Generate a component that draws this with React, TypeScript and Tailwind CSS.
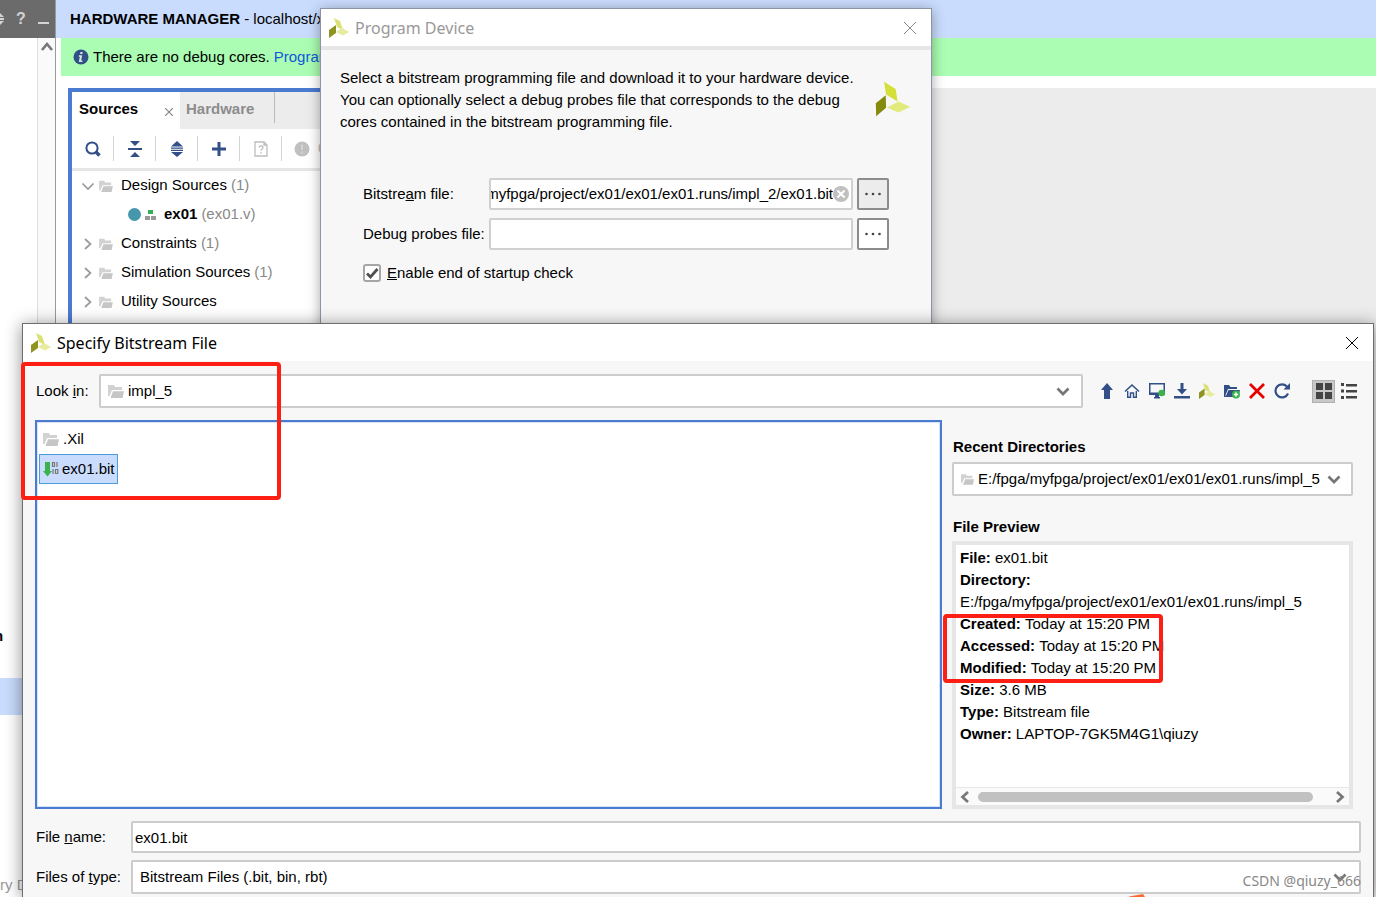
import type { ReactNode } from 'react';

const LOGO_BRIGHT = ['#d5df3a', '#858a0c', '#e3ea7c'];
const LOGO_SOFT = ['#dbe173', '#8f9420', '#e7eba0'];

function XilinxLogo({ className, colors = LOGO_SOFT }: { className: string; colors?: string[] }) {
    return (
        <svg viewBox="286 241 108 109" className={className} aria-hidden="true">
            <path d="M313 243 348 265 354 303 319 282Z" fill={colors[0]} />
            <path d="M288 308 318 284 319 322 289 348Z" fill={colors[1]} />
            <path d="M321 321 357 303 392 319 357 336Z" fill={colors[2]} />
        </svg>
    );
}

/* The title bar and toolbar sizes use a chunkier cut of the mark. */
function SmallLogo({ className }: { className: string }) {
    return (
        <svg viewBox="0 0 20 20" className={className} aria-hidden="true">
            <path d="M5 0l6 3 3 9-6-3Z" fill={LOGO_SOFT[0]} />
            <path d="M0 12l7-5v8l-7 5Z" fill={LOGO_SOFT[1]} />
            <path d="M7 14l6-4 7 4-6 3.500Z" fill={LOGO_SOFT[2]} />
        </svg>
    );
}

function FolderIcon({ className = 'h-3.5 w-4' }: { className?: string }) {
    return (
        <svg viewBox="0 0 16 14" className={`shrink-0 ${className}`} aria-hidden="true">
            <path d="M0 1h6l1 2h7v3H4L1.500 12H0Z" fill="#d2d2d2" />
            <path d="M5 7.200H16L14.500 14H2.500Z" fill="#c6c6c6" />
        </svg>
    );
}

const chevronPaths = {
    up: 'M2 10l5-6 5 6',
    down: 'M1.500 4.500l5.500 5.500 5.500-5.500',
    left: 'M10 2L4.500 7l5.500 5',
    right: 'M4 2l5.500 5L4 12',
};

function Chevron({ dir, thin = false }: { dir: keyof typeof chevronPaths; thin?: boolean }) {
    return (
        <svg viewBox="0 0 14 14" className="size-3.5 shrink-0" aria-hidden="true">
            <path d={chevronPaths[dir]} fill="none" stroke="currentColor" strokeWidth={thin ? 1.7 : 2.7} />
        </svg>
    );
}

function CloseIcon() {
    return (
        <svg viewBox="0 0 12 12" className="size-3" aria-hidden="true">
            <path d="M0 0l12 12M12 0L0 12" stroke="currentColor" strokeWidth="1" />
        </svg>
    );
}

function TitleBar({ title, muted = false }: { title: string; muted?: boolean }) {
    return (
        <div className="flex h-[37px] shrink-0 items-center bg-white pr-[15px] pl-2">
            <SmallLogo className="size-5" />
            <h2
                className={`ml-1.5 flex-1 font-['Noto_Sans',sans-serif] text-[16px] ${muted ? 'text-[#999]' : 'text-black'}`}
            >
                {title}
            </h2>
            <button type="button" aria-label="Close" className={muted ? 'text-[#888]' : 'text-black'}>
                <CloseIcon />
            </button>
        </div>
    );
}

/* ---- Main window ---- */

function FlowNavigator() {
    return (
        <aside className="flex w-14 shrink-0 flex-col border-r border-[#9a9a9a]">
            <div className="flex h-[38px] items-center bg-[#6b6b6b] text-[#d4d4d4]">
                <svg viewBox="0 0 4 12" className="h-3 w-1" aria-hidden="true">
                    <path d="M0 0L4 4H0ZM0 5h4v2H0ZM0 8h4L0 12Z" fill="currentColor" />
                </svg>
                <button type="button" className="ml-3 text-[16px] font-bold">?</button>
                <button type="button" aria-label="Minimize" className="mt-2 ml-3 h-0.5 w-[11px] bg-[#d4d4d4]" />
            </div>
            <div className="flex flex-1 overflow-hidden">
                <div className="flex w-[37px] flex-col justify-between">
                    <div className="mt-[590px]">
                        <p className="-ml-1.5 h-4 leading-4 font-bold">n</p>
                        <div className="mt-[34px] h-[37px] bg-[#c9dcfd]" />
                    </div>
                    <p className="mb-0.5 leading-5 whitespace-nowrap text-[#999]">ry D</p>
                </div>
                <div className="flex w-[18px] justify-center border-l border-[#ddd] bg-[#fafafa] pt-0.5 text-[#777]">
                    <Chevron dir="up" />
                </div>
            </div>
        </aside>
    );
}

function ToolCell({ label, children }: { label: string; children: ReactNode }) {
    return (
        <button
            type="button"
            aria-label={label}
            className="flex h-[25px] w-[42px] items-center justify-center border-r border-[#d4d4d4] text-[#334f87]"
        >
            {children}
        </button>
    );
}

function SourcesToolbar() {
    return (
        <div className="flex h-[42px] items-center border-b-3 border-[#e6e6e6]">
            <ToolCell label="Search">
                <svg viewBox="0 0 16 16" className="size-4">
                    <circle cx="7" cy="7" r="5.6" fill="none" stroke="currentColor" strokeWidth="2" />
                    <path d="M11 11l3.5 3.5" stroke="currentColor" strokeWidth="3.4" />
                </svg>
            </ToolCell>
            <ToolCell label="Collapse all">
                <svg viewBox="0 0 14 16" className="h-4 w-3.5" fill="currentColor">
                    <path d="M2 0h10L7 5ZM0 7h14v2H0ZM7 11l5 5H2Z" />
                </svg>
            </ToolCell>
            <ToolCell label="Expand all">
                <svg viewBox="0 0 14 16" className="h-4 w-3.5" fill="currentColor">
                    <path d="M7 0l6 5.500H1ZM1 6.500h12v1.200H1ZM1 8.700h12v1.300H1ZM1 11h12l-6 5Z" />
                </svg>
            </ToolCell>
            <ToolCell label="Add sources">
                <svg viewBox="0 0 16 16" className="size-4" fill="currentColor">
                    <path d="M6.5 1h3v5.500h5.500v3H9.500V15h-3V9.500H1v-3h5.500Z" />
                </svg>
            </ToolCell>
            <ToolCell label="Show missing files">
                <svg viewBox="0 0 14 16" className="h-4 w-3.5" fill="none" stroke="#bdbdbd" strokeWidth="1.3">
                    <path d="M1 1h9l3 3v11H1ZM10 1v3h3" />
                    <path d="M5 6.500c0-2 4-2 4 0 0 1.500-2 1.500-2 3.200M7 11v1.500" />
                </svg>
            </ToolCell>
            <div className="ml-3 flex items-center gap-2 text-[#bbb]">
                <svg viewBox="0 0 16 16" className="size-4">
                    <circle cx="8" cy="8" r="7.500" fill="#c0c0c0" />
                    <path d="M8 3.500v5.500M8 10.500v2" stroke="#d6d6d6" strokeWidth="1.800" />
                </svg>
                <span>0</span>
            </div>
        </div>
    );
}

const sources = [
    { name: 'Design Sources', count: '(1)', open: true },
    { name: 'Constraints', count: '(1)' },
    { name: 'Simulation Sources', count: '(1)' },
    { name: 'Utility Sources', count: '' },
];

function SourcesPanel() {
    return (
        <section className="w-[400px] border-4 border-[#4a7bd0] bg-white">
            <div className="flex h-[37px] bg-[#ececec] font-bold">
                <div className="flex w-[108px] items-center justify-between bg-white pr-[7px] pb-0.5 pl-[7px]">
                    <span>Sources</span>
                    <button type="button" aria-label="Close Sources" className="mt-1 text-[#888]">
                        <svg viewBox="0 0 8 8" className="size-2">
                            <path d="M0 0l8 8M8 0L0 8" stroke="currentColor" strokeWidth="1.200" />
                        </svg>
                    </button>
                </div>
                <div className="flex h-[31px] w-[95px] items-center border-r border-[#bbb] pt-1 pl-1.5 text-[#8c8c8c]">Hardware</div>
            </div>
            <SourcesToolbar />
            <ul>
                {sources.map((s) => (
                    <li key={s.name}>
                        <div className="flex h-[29px] items-center pl-[9px]">
                            <span className="text-[#999]">
                                <Chevron dir={s.open ? 'down' : 'right'} thin />
                            </span>
                            <FolderIcon className="ml-1 h-3 w-[14px]" />
                            <span className="ml-2">{s.name}</span>
                            <span className="ml-1 text-[#888]">{s.count}</span>
                        </div>
                        {s.open && (
                            <div className="flex h-[29px] items-center pl-14">
                                <span className="size-[13px] rounded-full bg-[#4797ac]" />
                                <svg viewBox="0 0 12 10" className="ml-1 h-2.5 w-3">
                                    <path d="M3 0h5v4H3Z" fill="#34b156" />
                                    <path d="M0 6h5v4H0ZM6 6h5v4H6Z" fill="#999" />
                                </svg>
                                <span className="ml-[7px] font-bold">ex01</span>
                                <span className="ml-1 text-[#888]">(ex01.v)</span>
                            </div>
                        )}
                    </li>
                ))}
            </ul>
        </section>
    );
}

function HardwareManager() {
    return (
        <main className="flex min-w-0 flex-1 flex-col">
            <header className="flex h-[38px] shrink-0 items-center bg-[#c9dcfd] pl-3.5 whitespace-pre">
                <b>HARDWARE MANAGER</b> - localhost/xil
            </header>
            <div className="ml-[5px] flex h-[38px] shrink-0 items-center bg-[#aafdb2] pl-3">
                <svg viewBox="0 0 16 16" className="size-4" aria-hidden="true">
                    <circle cx="8" cy="8" r="7.500" fill="#334f87" />
                    <path d="M7.500 3h2.200l-.4 2H7.100ZM6 6.200h3.200L8.200 11.400h1.200V13H5.800l1-5.300H5.700Z" fill="#cfe8dc" />
                </svg>
                <span className="ml-1">There are no debug cores.</span>
                <a href="#program" className="ml-1 text-[#1155dd]">Program</a>
            </div>
            <div className="mt-3 ml-3 flex flex-1 bg-[#ececec]">
                <SourcesPanel />
            </div>
        </main>
    );
}

/* ---- Program Device ---- */

function BrowseButton({ label, className }: { label: string; className: string }) {
    return (
        <button
            type="button"
            aria-label={label}
            className={`ml-1 flex size-8 items-center justify-center rounded-xs border-2 border-[#8c8c8c] ${className}`}
        >
            <svg viewBox="0 0 16 4" className="h-1 w-4" fill="#444">
                <circle cx="1.500" cy="2" r="1.300" />
                <circle cx="8" cy="2" r="1.300" />
                <circle cx="14.500" cy="2" r="1.300" />
            </svg>
        </button>
    );
}

// Long paths show their tail, so the file name stays readable.
function scrollToEnd(el: HTMLInputElement | null) {
    if (el) el.scrollLeft = el.scrollWidth;
}

function ProgramDeviceDialog() {
    return (
        <section
            role="dialog"
            aria-label="Program Device"
            className="absolute top-2 left-80 h-[340px] w-[612px] border border-[#8b95a5] bg-[#f7f7f7] shadow-[0_2px_12px_rgba(0,0,0,0.35)]"
        >
            <TitleBar title="Program Device" muted />
            <div className="border-t-4 border-[#e6e6e6] pt-[17px] pr-5 pl-[19px]">
                <div className="flex items-start justify-between">
                    <p className="leading-[22px] whitespace-nowrap">
                        Select a bitstream programming file and download it to your hardware device.
                        <br />
                        You can optionally select a debug probes file that corresponds to the debug
                        <br />
                        cores contained in the bitstream programming file.
                    </p>
                    <XilinxLogo className="mt-3.5 size-9" colors={LOGO_BRIGHT} />
                </div>
                <div className="mt-[45px] flex flex-col gap-2 pr-[22px] pl-[23px]">
                    <div className="flex items-center">
                        <label htmlFor="bitfile" className="w-[126px]">Bitstre<u>a</u>m file:</label>
                        <div className="flex h-8 flex-1 items-center rounded-xs border-2 border-[#d0d0d0] bg-white pr-0.5">
                            <input
                                id="bitfile"
                                ref={scrollToEnd}
                                className="min-w-0 flex-1 outline-none"
                                defaultValue="/myfpga/project/ex01/ex01/ex01.runs/impl_2/ex01.bit"
                            />
                            <button type="button" aria-label="Clear">
                                <svg viewBox="0 0 16 16" className="size-4">
                                    <circle cx="8" cy="8" r="8" fill="#c0c0c0" />
                                    <path d="M4.500 4.500l7 7M11.500 4.500l-7 7" stroke="#fff" strokeWidth="2" />
                                </svg>
                            </button>
                        </div>
                        <BrowseButton label="Browse bitstream file" className="bg-[#ececec]" />
                    </div>
                    <div className="flex items-center">
                        <label htmlFor="probes" className="w-[126px]">Debu<u>g</u> probes file:</label>
                        <input id="probes" className="h-8 min-w-0 flex-1 rounded-xs border-2 border-[#d0d0d0] bg-white px-1 outline-none" />
                        <BrowseButton label="Browse debug probes file" className="bg-white" />
                    </div>
                    <div className="mt-1 flex items-center">
                        <span className="grid size-[18px]">
                            <input
                                id="startup"
                                type="checkbox"
                                defaultChecked
                                className="peer col-start-1 row-start-1 size-[18px] appearance-none rounded-[3px] border-2 border-[#a6a6a6] bg-white"
                            />
                            <svg
                                viewBox="0 0 18 18"
                                className="pointer-events-none invisible col-start-1 row-start-1 size-[18px] peer-checked:visible"
                            >
                                <path d="M4 9.500l3.500 3.500L14.500 5" fill="none" stroke="#505050" strokeWidth="2.800" />
                            </svg>
                        </span>
                        <label htmlFor="startup" className="ml-1.5"><u>E</u>nable end of startup check</label>
                    </div>
                </div>
            </div>
        </section>
    );
}

/* ---- Specify Bitstream File ---- */

const navIcons: { label: string; icon: ReactNode }[] = [
    { label: 'Up', icon: <path d="M8 0l6 7h-3v9H5V7H2Z" fill="#334f87" /> },
    {
        label: 'Home',
        icon: (
            <>
                <path d="M1 8.500L8 2l7 6.500" fill="none" stroke="#334f87" strokeWidth="1.600" />
                <path d="M3.700 8v6.300h2.800V10h3v4.300h2.800V8" fill="none" stroke="#334f87" strokeWidth="1.400" />
            </>
        ),
    },
    {
        label: 'Desktop',
        icon: (
            <>
                <path d="M0 0h16v12H0ZM1.500 1.500v8h13v-8Z" fill="#334f87" fillRule="evenodd" />
                <path d="M6 12h4v2h1v1.500H5V14h1Z" fill="#334f87" />
                <circle cx="12.700" cy="10" r="3.300" fill="#3cb24b" />
            </>
        ),
    },
    { label: 'Downloads', icon: <path d="M6.500 0h3v6H13l-5 5.500L3 6h3.500ZM0 13h16v2.500H0Z" fill="#334f87" /> },
    { label: 'Install directory', icon: null },
    {
        label: 'New folder',
        icon: (
            <>
                <path d="M0 2h5l1.500 2H13v2H4L1.500 12 2 14H0Z" fill="#334f87" />
                <path d="M4.500 7H16l-2 7H1.500Z" fill="#334f87" />
                <circle cx="12" cy="11.500" r="4" fill="#3cb24b" />
                <path d="M12 9.300v4.400M9.800 11.500h4.400" stroke="#fff" strokeWidth="1.300" />
            </>
        ),
    },
    { label: 'Delete', icon: <path d="M1 1l14 14M15 1L1 15" stroke="#e60000" strokeWidth="2.800" /> },
    {
        label: 'Refresh',
        icon: (
            <>
                <path d="M14 10.500A6.500 6.500 0 1 1 12.800 3.500" fill="none" stroke="#334f87" strokeWidth="2.200" />
                <path d="M16 0v6.500H9.500Z" fill="#334f87" />
            </>
        ),
    },
];

function NavToolbar() {
    return (
        <div className="ml-[11px] flex items-center">
            {navIcons.map(({ label, icon }) => (
                <button key={label} type="button" aria-label={label} className="flex w-[25px] justify-center">
                    {icon ? (
                        <svg viewBox="0 0 16 16" className="size-4">{icon}</svg>
                    ) : (
                        <SmallLogo className="size-4" />
                    )}
                </button>
            ))}
            <button
                type="button"
                aria-label="Icon view"
                className="ml-[18px] flex size-[23px] items-center justify-center border border-[#b0b0b0] bg-[#c8c8c8]"
            >
                <svg viewBox="0 0 16 16" className="size-4" fill="#444">
                    <path d="M0 0h7v7H0ZM9 0h7v7H9ZM0 9h7v7H0ZM9 9h7v7H9Z" />
                </svg>
            </button>
            <button type="button" aria-label="List view" className="mr-1 ml-1.5">
                <svg viewBox="0 0 16 16" className="size-4" fill="#444">
                    <path d="M0 0h3v3H0ZM5 1h11v2.500H5ZM0 6.500h3v3H0ZM5 7h11v2.500H5ZM0 13h3v3H0ZM5 13h11v2.500H5Z" />
                </svg>
            </button>
        </div>
    );
}

function ComboBox({ id, value, icon, className }: { id: string; value: string; icon?: ReactNode; className: string }) {
    return (
        <div className={`flex h-[34px] items-center rounded-xs border-2 border-[#ccc] bg-white ${className}`}>
            {icon}
            <select id={id} className="min-w-0 flex-1 appearance-none outline-none">
                <option>{value}</option>
            </select>
            <span className="text-[#777]">
                <Chevron dir="down" />
            </span>
        </div>
    );
}

function FileList() {
    return (
        <ul className="flex min-w-0 flex-1 flex-col items-start border-2 border-[#4a7bd0] bg-white p-0.5 shadow-[inset_0_0_0_1px_#d5e2f8]">
            <li className="flex h-[30px] items-center px-1">
                <FolderIcon />
                <span className="ml-1">.Xil</span>
            </li>
            <li className="flex h-[30px] items-center border border-[#4d9bd9] bg-[#c9dcfd] pr-0.5 pl-[3px]">
                <svg viewBox="0 0 16 16" className="size-4" aria-hidden="true">
                    <path d="M2 1h5v9h2l-4.500 5.500L0 10h2Z" fill="#3cb24b" />
                    <path
                        d="M9.500 1.500h2v4h-2ZM14 1v5M10 8v5M12.500 8.500h2.300v4h-2.300Z"
                        fill="none"
                        stroke="#777"
                        strokeWidth="1.200"
                    />
                </svg>
                <span className="ml-[3px]">ex01.bit</span>
            </li>
        </ul>
    );
}

const preview = [
    ['File:', 'ex01.bit'],
    ['Directory:', 'E:/fpga/myfpga/project/ex01/ex01/ex01.runs/impl_5'],
    ['Created:', 'Today at 15:20 PM'],
    ['Accessed:', 'Today at 15:20 PM'],
    ['Modified:', 'Today at 15:20 PM'],
    ['Size:', '3.6 MB'],
    ['Type:', 'Bitstream file'],
    ['Owner:', 'LAPTOP-7GK5M4G1\\qiuzy'],
];

function PreviewColumn() {
    return (
        <div className="mr-2 ml-2.5 flex w-[401px] shrink-0 flex-col">
            <label htmlFor="recent" className="mt-4 mb-1 h-[22px] pl-px leading-[22px] font-bold">Recent Directories</label>
            <ComboBox
                id="recent"
                value="E:/fpga/myfpga/project/ex01/ex01/ex01.runs/impl_5"
                icon={<FolderIcon className="mr-1 ml-[7px] h-3 w-[13px]" />}
                className="pr-2.5"
            />
            <h3 className="mt-5 mb-[3px] h-[22px] pl-px leading-[22px] font-bold">File Preview</h3>
            <div className="relative flex flex-1 flex-col border-4 border-[#e6e6e6] bg-white">
                <dl className="flex-1 px-1 pt-0.5 leading-[22px]">
                    {preview.map(([term, text]) => (
                        <div key={term}>
                            <dt className={term === 'Directory:' ? 'font-bold' : 'inline font-bold'}>{term}</dt>{' '}
                            <dd className="inline">{text}</dd>
                        </div>
                    ))}
                </dl>
                <div className="flex h-[18px] items-center justify-between border-t border-[#e6e6e6] bg-[#fafafa] px-0.5 text-[#777]">
                    <Chevron dir="left" />
                    <div className="mr-5 ml-1.5 h-2.5 flex-1 rounded-full bg-[#c1c1c1]" />
                    <Chevron dir="right" />
                </div>
                <div className="pointer-events-none absolute top-[69px] -left-[13px] h-[69px] w-[220px] rounded-sm border-4 border-[#fd1f14]" />
            </div>
        </div>
    );
}

function SpecifyFileDialog() {
    return (
        <section
            role="dialog"
            aria-label="Specify Bitstream File"
            className="absolute top-[323px] right-0.5 bottom-0 left-[22px] flex flex-col border border-b-0 border-[#6e6e6e] bg-[#f7f7f7] shadow-[0_2px_16px_rgba(0,0,0,0.45)]"
        >
            <TitleBar title="Specify Bitstream File" />
            <div className="flex flex-1 flex-col pt-[13px] pr-3 pb-[3px] pl-3">
                <div className="flex items-center">
                    <label htmlFor="lookin" className="w-16 pl-px">Look <u>i</u>n:</label>
                    <ComboBox id="lookin" value="impl_5" icon={<FolderIcon className="mr-1 ml-[7px] h-3.5 w-4" />} className="flex-1 pr-[11px]" />
                    <NavToolbar />
                </div>
                <div className="mt-3 flex flex-1">
                    <FileList />
                    <PreviewColumn />
                </div>
                <div className="mt-3 flex items-center">
                    <label htmlFor="filename" className="w-24 pl-px">File <u>n</u>ame:</label>
                    <input
                        id="filename"
                        defaultValue="ex01.bit"
                        className="h-8 min-w-0 flex-1 rounded-xs border-2 border-[#ccc] bg-white px-0.5 outline-none"
                    />
                </div>
                <div className="mt-[7px] flex items-center">
                    <label htmlFor="filetype" className="w-24 pl-px">Files of <u>t</u>ype:</label>
                    <ComboBox id="filetype" value="Bitstream Files (.bit, bin, rbt)" className="flex-1 pr-3 pl-[7px]" />
                </div>
            </div>
            <div className="pointer-events-none absolute top-[38px] -left-0.5 h-[138px] w-[260px] rounded-sm border-4 border-[#fd1f14]" />
            <svg viewBox="0 0 18 3" className="absolute right-[226px] bottom-0 h-[3px] w-[18px]" aria-hidden="true">
                <path d="M0 2.500L14 0l2 3H0Z" fill="#fb6a35" />
            </svg>
            <span className="pointer-events-none absolute right-3 bottom-1.5 font-['Noto_Sans',sans-serif] text-[14px] leading-5 text-[#888]">
                CSDN @qiuzy_666
            </span>
        </section>
    );
}

export default function App() {
    return (
        <div className="relative flex h-screen overflow-hidden bg-white font-['Liberation_Sans',Arial,sans-serif] text-[15px] text-black">
            <FlowNavigator />
            <HardwareManager />
            <ProgramDeviceDialog />
            <SpecifyFileDialog />
        </div>
    );
}
